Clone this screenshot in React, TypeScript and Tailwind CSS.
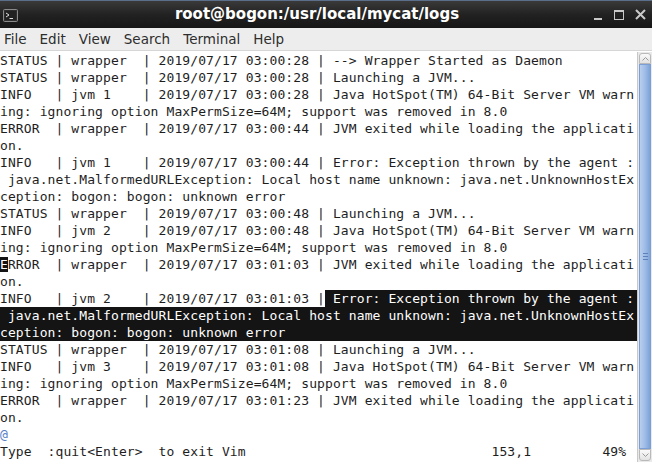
import React from "react";

const mono = "font-['DejaVu_Sans_Mono','Liberation_Mono',monospace]";

type Row = { text: string; hl?: "full" | "tail" | "cursor" | "at" };

const rows: Row[] = [
  { text: "STATUS | wrapper  | 2019/07/17 03:00:28 | --> Wrapper Started as Daemon" },
  { text: "STATUS | wrapper  | 2019/07/17 03:00:28 | Launching a JVM..." },
  { text: "INFO   | jvm 1    | 2019/07/17 03:00:28 | Java HotSpot(TM) 64-Bit Server VM warn" },
  { text: "ing: ignoring option MaxPermSize=64M; support was removed in 8.0" },
  { text: "ERROR  | wrapper  | 2019/07/17 03:00:44 | JVM exited while loading the applicati" },
  { text: "on." },
  { text: "INFO   | jvm 1    | 2019/07/17 03:00:44 | Error: Exception thrown by the agent :" },
  { text: " java.net.MalformedURLException: Local host name unknown: java.net.UnknownHostEx" },
  { text: "ception: bogon: bogon: unknown error" },
  { text: "STATUS | wrapper  | 2019/07/17 03:00:48 | Launching a JVM..." },
  { text: "INFO   | jvm 2    | 2019/07/17 03:00:48 | Java HotSpot(TM) 64-Bit Server VM warn" },
  { text: "ing: ignoring option MaxPermSize=64M; support was removed in 8.0" },
  { text: "ERROR  | wrapper  | 2019/07/17 03:01:03 | JVM exited while loading the applicati", hl: "cursor" },
  { text: "on." },
  { text: "INFO   | jvm 2    | 2019/07/17 03:01:03 | Error: Exception thrown by the agent :", hl: "tail" },
  { text: " java.net.MalformedURLException: Local host name unknown: java.net.UnknownHostEx", hl: "full" },
  { text: "ception: bogon: bogon: unknown error", hl: "full" },
  { text: "STATUS | wrapper  | 2019/07/17 03:01:08 | Launching a JVM..." },
  { text: "INFO   | jvm 3    | 2019/07/17 03:01:08 | Java HotSpot(TM) 64-Bit Server VM warn" },
  { text: "ing: ignoring option MaxPermSize=64M; support was removed in 8.0" },
  { text: "ERROR  | wrapper  | 2019/07/17 03:01:23 | JVM exited while loading the applicati" },
  { text: "on." },
  { text: "@", hl: "at" },
  {
    text:
      "Type  :quit<Enter>  to exit Vim" +
      " ".repeat(31) +
      "153,1" +
      " ".repeat(9) +
      "49%",
  },
];

function TermRow({ row }: { row: Row }) {
  if (row.hl === "full") {
    return <div className="h-[17px] bg-[#141414] text-white">{row.text}</div>;
  }
  if (row.hl === "tail") {
    return (
      <div className="h-[17px] flex">
        <span>{row.text.slice(0, 41)}</span>
        <span className="flex-1 bg-[#141414] text-white">{row.text.slice(41)}</span>
      </div>
    );
  }
  if (row.hl === "cursor") {
    return (
      <div className="h-[17px]">
        <span className="bg-[#141414] text-white">{row.text[0]}</span>
        {row.text.slice(1)}
      </div>
    );
  }
  if (row.hl === "at") {
    return <div className="h-[17px] text-[#5a7fc8]">{row.text}</div>;
  }
  return <div className="h-[17px]">{row.text}</div>;
}

function TerminalIcon() {
  return (
    <svg width="15" height="13" viewBox="0 0 15 13">
      <rect x="0.5" y="0.5" width="14" height="12" rx="1" fill="#3a3a3a" stroke="#8a8a8a" />
      <rect x="1.5" y="1.5" width="12" height="10" fill="#222" />
      <path d="M3 4 L6 6 L3 8" stroke="#ddd" strokeWidth="1" fill="none" />
      <path d="M6.5 9.5 H10" stroke="#ddd" strokeWidth="1" />
    </svg>
  );
}

function ScrollBar() {
  return (
    <div className="w-[15px] flex flex-col bg-[#e9e9e9] border-l border-[#c8c8c8]">
      <div className="h-[11px] mx-[1px] mt-[1px] border border-[#b9b9b9] rounded-t-[3px] bg-gradient-to-b from-[#fafafa] to-[#e2e2e2] flex items-center justify-center">
        <svg width="7" height="4" viewBox="0 0 7 4">
          <path d="M0.5 3.5 L3.5 0.5 L6.5 3.5" stroke="#9a9a9a" fill="none" />
        </svg>
      </div>
      <div className="flex-1 mx-[1px] bg-gradient-to-r from-[#b9cfee] via-[#9ebce6] to-[#7ea3d8] border border-[#7b9fd4] flex items-center justify-center">
        <div className="flex flex-col gap-[2px]">
          <div className="w-[5px] h-px bg-[#5d82bb]" />
          <div className="w-[5px] h-px bg-[#5d82bb]" />
          <div className="w-[5px] h-px bg-[#5d82bb]" />
        </div>
      </div>
      <div className="h-[12px] mx-[1px] mb-[1px] border border-[#b9b9b9] rounded-b-[3px] bg-gradient-to-b from-[#fafafa] to-[#e2e2e2] flex items-center justify-center">
        <svg width="7" height="4" viewBox="0 0 7 4">
          <path d="M0.5 0.5 L3.5 3.5 L6.5 0.5" stroke="#9a9a9a" fill="none" />
        </svg>
      </div>
    </div>
  );
}

export default function App() {
  return (
    <div className="w-[652px] h-[462px] overflow-hidden flex flex-col bg-white">
      {/* title bar */}
      <div className="h-[28px] shrink-0 flex items-center bg-gradient-to-b from-[#3a3a3a] via-[#222] to-[#161616] border-t border-[#5b6e8a]">
        <div className="pl-[3px] pt-[1px]">
          <TerminalIcon />
        </div>
        <div className="flex-1 text-center pl-[22px] text-white font-bold text-[15px] font-['DejaVu_Sans',sans-serif]">
          root@bogon:/usr/local/mycat/logs
        </div>
        <div className="flex items-center gap-[11px] pr-[6px]">
          <div className="w-[9px] h-[10px] flex items-end">
            <div className="w-[8px] h-[2px] bg-[#c9c9c9]" />
          </div>
          <div className="w-[10px] h-[10px] border border-[#c9c9c9] border-t-2" />
          <svg width="11" height="11" viewBox="0 0 11 11">
            <path d="M1 1 L10 10 M10 1 L1 10" stroke="#c9c9c9" strokeWidth="2" />
          </svg>
        </div>
      </div>

      {/* menu bar */}
      <div className="h-[23px] shrink-0 flex items-center gap-[13px] pl-[4px] bg-[#ededed] border-b border-[#d6d6d6] text-[13.5px] text-[#2e2e2e] font-['DejaVu_Sans',sans-serif]">
        <span>File</span>
        <span>Edit</span>
        <span>View</span>
        <span>Search</span>
        <span>Terminal</span>
        <span>Help</span>
      </div>

      {/* terminal body */}
      <div className="flex-1 flex min-h-0 pt-px">
        <div className={`w-[637px] overflow-hidden whitespace-pre text-[13px] leading-[17px] tracking-[0.1px] text-[#1e1e1e] ${mono}`}>
          {rows.map((r, i) => (
            <TermRow key={i} row={r} />
          ))}
        </div>
        <ScrollBar />
      </div>
    </div>
  );
}
